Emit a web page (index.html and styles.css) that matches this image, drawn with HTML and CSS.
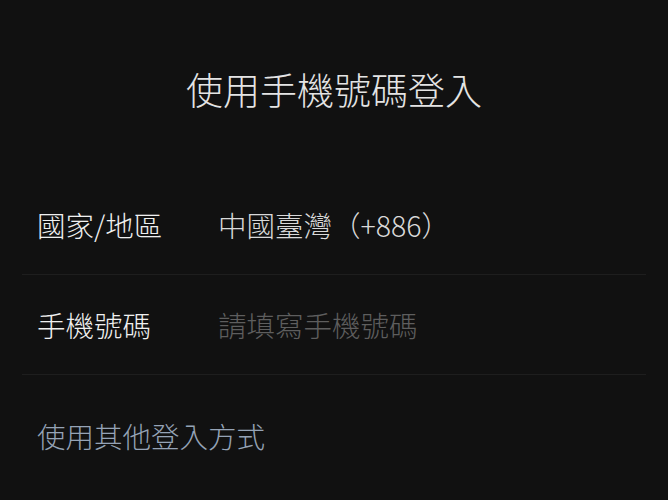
FILE: index.html
```html
<!DOCTYPE html>
<html lang="zh-Hant">
<head>
<meta charset="utf-8">
<title>使用手機號碼登入</title>
<link rel="stylesheet" href="styles.css">
</head>
<body>
<div class="page">
  <h1 class="title">使用手機號碼登入</h1>
  <div class="form">
    <div class="row">
      <span class="label">國家/地區</span>
      <span class="value">中國臺灣（+886）</span>
    </div>
    <div class="row">
      <span class="label">手機號碼</span>
      <span class="placeholder">請填寫手機號碼</span>
    </div>
  </div>
  <a class="other">使用其他登入方式</a>
</div>
</body>
</html>
```
FILE: styles.css
```css
html, body {
  margin: 0;
  padding: 0;
  background: #111111;
}
body {
  font-family: "Noto Sans CJK TC", "Noto Sans", sans-serif;
  font-weight: 300;
  width: 668px;
  height: 500px;
  overflow: hidden;
}
.page {
  display: flex;
  flex-direction: column;
}
.title {
  margin: 0;
  padding-top: 63px;
  height: 175px;
  box-sizing: border-box;
  font-size: 37px;
  font-weight: 300;
  line-height: 52px;
  color: #e4e4e4;
  text-align: center;
}
.form {
  margin: 0 22px;
  display: flex;
  flex-direction: column;
}
.row {
  height: 100px;
  box-sizing: border-box;
  border-bottom: 1px solid #1e1e1e;
  display: flex;
  align-items: center;
  padding: 0 15px;
  font-size: 28.5px;
}
.label {
  width: 181px;
  color: #f0f0f0;
}
.value {
  color: #d9d9d9;
}
.placeholder {
  color: #5e5e5e;
}
.other {
  margin: 0 37px;
  padding-top: 41px;
  font-size: 28.5px;
  line-height: 40px;
  color: #95a3b6;
}
```
